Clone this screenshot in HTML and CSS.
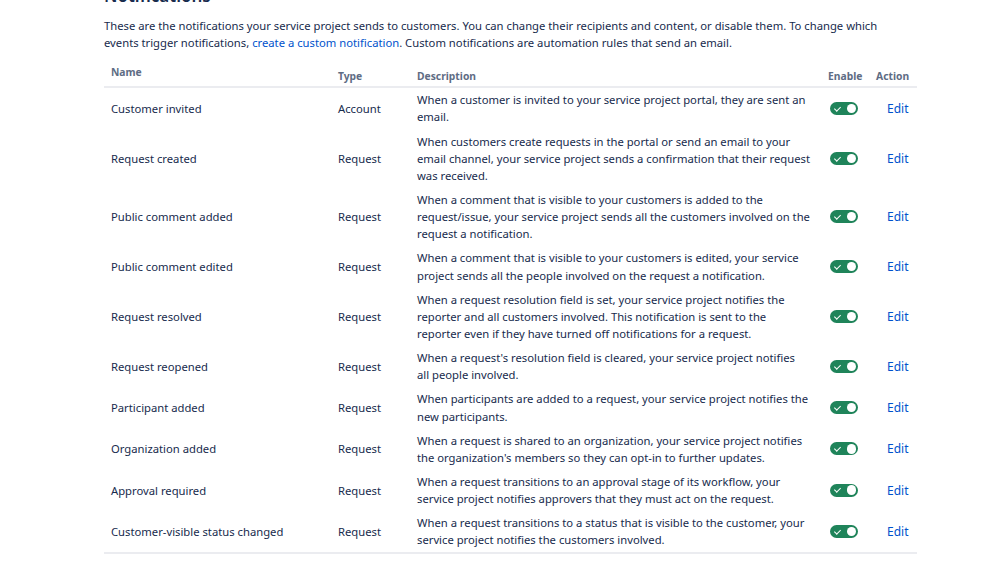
FILE: index.html
```html
<!DOCTYPE html>
<html lang="en">
<head>
<meta charset="utf-8">
<title>Notifications</title>
<link rel="stylesheet" href="styles.css">
</head>
<body>
<main class="page">
  <h2 class="title">Notifications</h2>
  <p class="intro">These are the notifications your service project sends to customers. You can change their recipients and content, or disable them. To change which events trigger notifications, <a class="link" href="#">create a custom notification</a>. Custom notifications are automation rules that send an email.</p>
  <table class="table">
    <colgroup>
      <col class="c-name"><col class="c-type"><col class="c-desc"><col class="c-enable"><col class="c-action">
    </colgroup>
    <thead>
      <tr>
        <th class="th-name">Name</th>
        <th>Type</th>
        <th>Description</th>
        <th>Enable</th>
        <th>Action</th>
      </tr>
    </thead>
    <tbody>
      <tr>
        <td>Customer invited</td><td>Account</td>
        <td>When a customer is invited to your service project portal, they are sent an email.</td>
        <td><span class="toggle"><span class="check"></span><span class="knob"></span></span></td>
        <td><a class="edit" href="#">Edit</a></td>
      </tr>
      <tr>
        <td>Request created</td><td>Request</td>
        <td>When customers create requests in the portal or send an email to your email channel, your service project sends a confirmation that their request was received.</td>
        <td><span class="toggle"><span class="check"></span><span class="knob"></span></span></td>
        <td><a class="edit" href="#">Edit</a></td>
      </tr>
      <tr>
        <td>Public comment added</td><td>Request</td>
        <td>When a comment that is visible to your customers is added to the request/issue, your service project sends all the customers involved on the request a notification.</td>
        <td><span class="toggle"><span class="check"></span><span class="knob"></span></span></td>
        <td><a class="edit" href="#">Edit</a></td>
      </tr>
      <tr>
        <td>Public comment edited</td><td>Request</td>
        <td>When a comment that is visible to your customers is edited, your service project sends all the people involved on the request a notification.</td>
        <td><span class="toggle"><span class="check"></span><span class="knob"></span></span></td>
        <td><a class="edit" href="#">Edit</a></td>
      </tr>
      <tr>
        <td>Request resolved</td><td>Request</td>
        <td>When a request resolution field is set, your service project notifies the reporter and all customers involved. This notification is sent to the<br>reporter even if they have turned off notifications for a request.</td>
        <td><span class="toggle"><span class="check"></span><span class="knob"></span></span></td>
        <td><a class="edit" href="#">Edit</a></td>
      </tr>
      <tr>
        <td>Request reopened</td><td>Request</td>
        <td>When a request's resolution field is cleared, your service project notifies<br>all people involved.</td>
        <td><span class="toggle"><span class="check"></span><span class="knob"></span></span></td>
        <td><a class="edit" href="#">Edit</a></td>
      </tr>
      <tr>
        <td>Participant added</td><td>Request</td>
        <td>When participants are added to a request, your service project notifies the new participants.</td>
        <td><span class="toggle"><span class="check"></span><span class="knob"></span></span></td>
        <td><a class="edit" href="#">Edit</a></td>
      </tr>
      <tr>
        <td>Organization added</td><td>Request</td>
        <td>When a request is shared to an organization, your service project notifies the organization's members so they can opt-in to further updates.</td>
        <td><span class="toggle"><span class="check"></span><span class="knob"></span></span></td>
        <td><a class="edit" href="#">Edit</a></td>
      </tr>
      <tr>
        <td>Approval required</td><td>Request</td>
        <td>When a request transitions to an approval stage of its workflow, your service project notifies approvers that they must act on the request.</td>
        <td><span class="toggle"><span class="check"></span><span class="knob"></span></span></td>
        <td><a class="edit" href="#">Edit</a></td>
      </tr>
      <tr>
        <td>Customer-visible status changed</td><td>Request</td>
        <td>When a request transitions to a status that is visible to the customer, your service project notifies the customers involved.</td>
        <td><span class="toggle"><span class="check"></span><span class="knob"></span></span></td>
        <td><a class="edit" href="#">Edit</a></td>
      </tr>
    </tbody>
  </table>
</main>
</body>
</html>
```
FILE: styles.css
```css
html, body {
  margin: 0;
  padding: 0;
  background: #ffffff;
}
body {
  font-family: "Noto Sans", "Open Sans", sans-serif;
  color: #172b4d;
  font-size: 11.25px;
  line-height: 17.14px;
}
.page {
  width: 813px;
  margin: -14px 0 0 104px;
}
.title {
  font-size: 17px;
  line-height: 20px;
  font-weight: 600;
  margin: 0;
  color: #172b4d;
}
.intro {
  max-width: 790px;
  margin: 11px 0 0;
}
.link {
  color: #0052cc;
  text-decoration: none;
}
.table {
  width: 813px;
  border-collapse: collapse;
  table-layout: fixed;
  margin-top: 10.5px;
}
.c-name { width: 227px; }
.c-type { width: 79px; }
.c-desc { width: 411px; }
.c-enable { width: 48px; }
.c-action { width: 48px; }
.table thead tr {
  border-bottom: 2px solid #ebecf0;
}
.table th {
  text-align: left;
  font-size: 10.3px;
  font-weight: 700;
  color: #5e6c84;
  line-height: 14px;
  padding: 3px 7px 3px;
  vertical-align: bottom;
}
.table th.th-name {
  padding-bottom: 7px;
}
.table tbody tr:last-child {
  border-bottom: 2px solid #ebecf0;
}
.table td {
  padding: 3.5px 7px;
  vertical-align: middle;
}
.table td:nth-child(4) {
  padding-left: 5px;
}
.toggle {
  display: flex;
  align-items: center;
  justify-content: space-between;
  box-sizing: border-box;
  width: 28px;
  height: 13px;
  border-radius: 7px;
  background: #1f845a;
  padding: 0 2px 0 5px;
  margin-left: 4px;
}
.check {
  width: 5px;
  height: 2.5px;
  border-left: 1.4px solid #ffffff;
  border-bottom: 1.4px solid #ffffff;
  transform: rotate(-45deg) translateY(-1px);
}
.knob {
  width: 9.5px;
  height: 9.5px;
  border-radius: 50%;
  background: #ffffff;
}
.edit {
  display: inline-block;
  color: #0052cc;
  text-decoration: none;
  font-size: 12px;
  padding-left: 11px;
}
```
